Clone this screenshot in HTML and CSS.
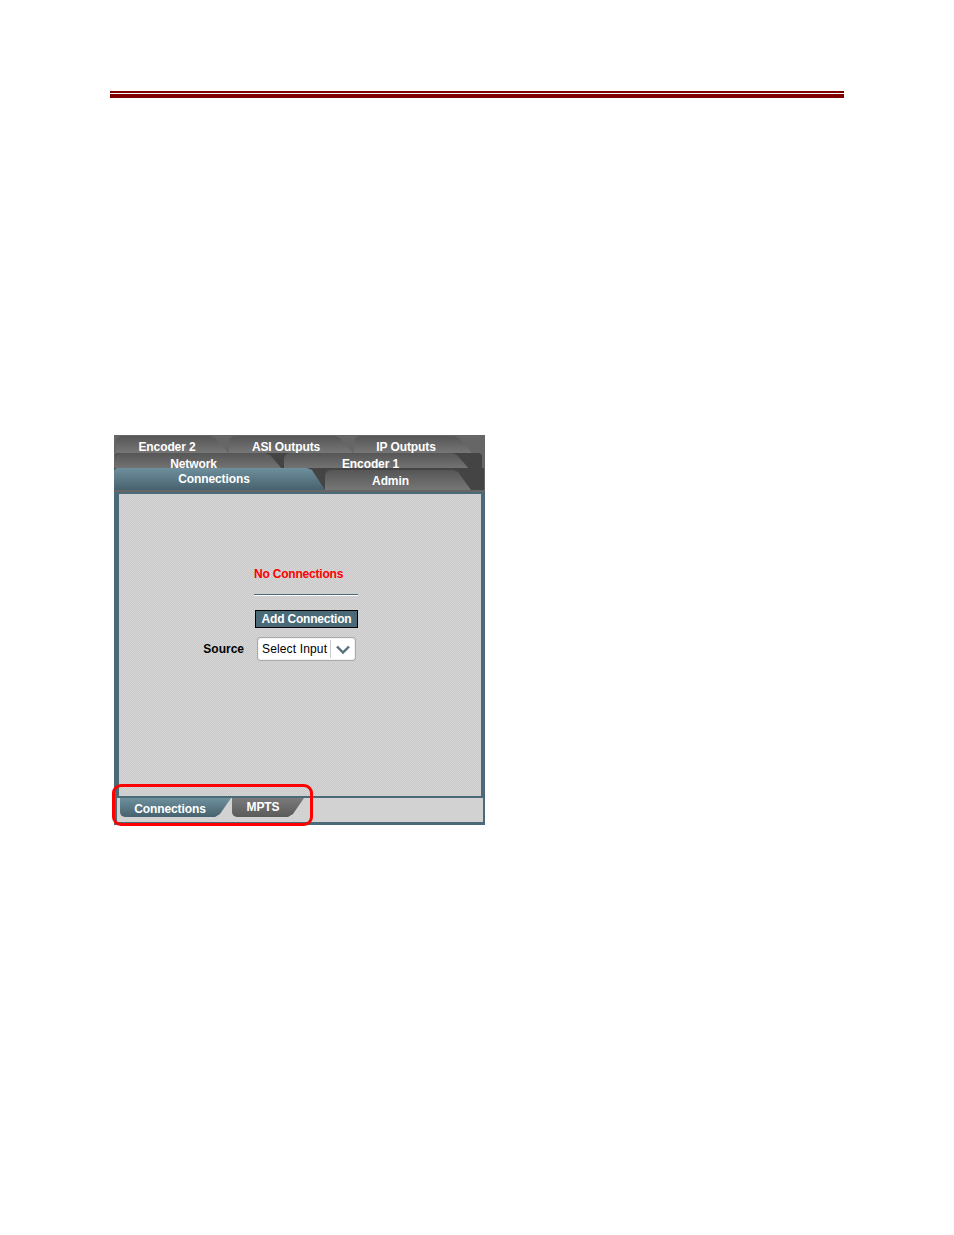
FILE: index.html
```html
<!DOCTYPE html>
<html lang="en">
<head>
    <meta charset="UTF-8">
    <title>Connections</title>
    <link rel="stylesheet" href="styles.css">
</head>
<body>

<div class="rule"></div>

<div class="panel">
    <div class="tabs">
        <div class="row row1">
            <div class="tab t-enc2">Encoder 2</div>
            <div class="tab t-asi">ASI Outputs</div>
            <div class="tab t-ip">IP Outputs</div>
        </div>
        <div class="row row2">
            <div class="tab t-net">Network</div>
            <div class="tab t-enc1">Encoder 1</div>
        </div>
        <div class="row row3">
            <div class="tab active t-conn">Connections</div>
            <div class="tab t-admin">Admin</div>
        </div>
    </div>

    <div class="content">
        <div class="form">
            <div></div>
            <div class="msg">No Connections</div>
            <div></div>
            <div class="divider"></div>
            <div></div>
            <button class="add">Add Connection</button>
            <div class="label">Source</div>
            <div class="select">
                <span class="select-text">Select Input</span>
                <span class="select-arrow">
                    <svg width="14" height="9" viewBox="0 0 14 9"><path d="M1 1.5 L7 7.5 L13 1.5" fill="none" stroke="#55707c" stroke-width="2.4"/></svg>
                </span>
            </div>
        </div>
    </div>

    <div class="subtabs">
        <div class="subtab active sub-conn">Connections</div>
        <div class="subtab sub-mpts">MPTS</div>
    </div>

    <div class="highlight"></div>
</div>

</body>
</html>
```

FILE: styles.css
```css
html, body {
    margin: 0;
    padding: 0;
    background: #fff;
}
body {
    height: 1235px;
    overflow: hidden;
    font-family: "Liberation Sans", Arial, sans-serif;
}
.rule {
    width: 734px;
    height: 1px;
    margin: 91px 0 0 110px;
    border-top: 2px solid #7f0000;
    border-bottom: 4px solid #7f0000;
}
.panel {
    position: relative;
    width: 371px;
    height: 390px;
    margin: 337px 0 0 114px;
    background: #4a6a78;
    display: flex;
    flex-direction: column;
}

/* top tabs */
.tabs {
    height: 57px;
    background: #666;
    overflow: hidden;
    flex: none;
}
.row {
    display: flex;
    position: relative;
}
.row1 {
    height: 18px;
    padding-left: 2px;
}
.row2 {
    height: 17px;
    margin: 0 3px 0 1px;
    background: #444;
    border-radius: 4px 4px 0 0;
}
.row3 {
    height: 22px;
    margin: -2px 1px 0 0;
    background: #444;
}
.tab {
    box-sizing: border-box;
    color: #fff;
    font-size: 12px;
    font-weight: bold;
    letter-spacing: -0.1px;
    text-align: center;
    line-height: 22px;
    border-radius: 6px 0 0 0;
    background: linear-gradient(#565656, #767676);
    clip-path: polygon(0 0, calc(100% - 18px) 0, calc(100% - 13px) 2px, 100% 100%, 0 100%);
}
.tab.active {
    background: linear-gradient(#6e8f9c, #47626e);
    line-height: 23px;
    border-radius: 4px 0 0 0;
}
.t-enc2 { width: 112px; margin-top: 1px; padding-right: 10px; }
.t-asi { width: 124px; margin-left: 1px; margin-top: 1px; padding-right: 10px; }
.t-ip { width: 118px; margin-left: 1px; margin-top: 1px; padding-right: 14px; }
.t-net { width: 168px; padding-right: 11px; line-height: 22px; }
.t-enc1 { width: 186px; margin-left: 1px; padding-right: 13px; line-height: 22px; }
.t-conn { width: 211px; padding-right: 11px; }
.t-admin { width: 146px; margin-top: 2px; padding-right: 15px; }

/* main area */
.content {
    box-sizing: border-box;
    height: 304px;
    margin: 0 2px 0 3px;
    border: 2px solid #4a6a78;
    border-bottom: 0;
    background: repeating-conic-gradient(#d6d6d6 0 25%, #c9c9c9 0 50%) 0 0 / 2px 2px;
    flex: none;
}
.form {
    display: grid;
    grid-template-columns: 125px 104px;
    column-gap: 10px;
    padding-top: 72px;
    align-items: center;
    font-size: 12px;
}
.msg {
    color: #f00;
    font-weight: bold;
    letter-spacing: -0.2px;
    line-height: 16px;
}
.divider {
    height: 1px;
    margin: 12px 0 14px;
    background: #4a6a78;
    border-bottom: 1px solid #fff;
}
.add {
    box-sizing: border-box;
    width: 103px;
    height: 18px;
    margin-left: 1px;
    padding: 0;
    border: 1px solid #000;
    background: #4a6a78;
    color: #fff;
    font: bold 12px "Liberation Sans", Arial, sans-serif;
    letter-spacing: -0.2px;
}
.label {
    font-weight: bold;
    text-align: right;
    margin-top: 9px;
}
.select {
    box-sizing: border-box;
    display: flex;
    align-items: center;
    width: 99px;
    height: 24px;
    margin: 9px 0 0 3px;
    background: #fff;
    border: 1px solid #aaa;
    border-radius: 3px;
    box-shadow: inset 0 0 1px #777;
}
.select-text {
    width: 73px;
    padding-left: 4px;
    box-sizing: border-box;
    font-size: 12px;
    letter-spacing: 0.15px;
    border-right: 1px solid #ccc;
    line-height: 18px;
}
.select-arrow {
    flex: 1;
    display: flex;
    justify-content: center;
}

/* bottom tabs */
.subtabs {
    flex: none;
    display: flex;
    box-sizing: border-box;
    height: 26px;
    margin: 0 2px 3px 3px;
    padding-left: 3px;
    background: #d2d2d2;
    border-top: 2px solid #4a6a78;
}
.subtab {
    box-sizing: border-box;
    color: #fff;
    font-size: 12px;
    font-weight: bold;
    letter-spacing: -0.1px;
    text-align: center;
    border-radius: 0 0 0 5px;
    clip-path: polygon(0 0, 100% 0, calc(100% - 11px) calc(100% - 3px), calc(100% - 16px) 100%, 0 100%);
}
.sub-conn {
    width: 111px;
    height: 19px;
    line-height: 22px;
    padding-right: 11px;
    background: linear-gradient(#6e8f9c, #47626e);
}
.sub-mpts {
    width: 72px;
    height: 19px;
    margin-left: 1px;
    line-height: 18px;
    padding-right: 10px;
    background: linear-gradient(#7a7a7a, #5a5a5a);
}
.highlight {
    position: absolute;
    left: -2px;
    top: 349px;
    width: 195px;
    height: 36px;
    border: 3px solid #f00;
    border-radius: 9px;
}
```
